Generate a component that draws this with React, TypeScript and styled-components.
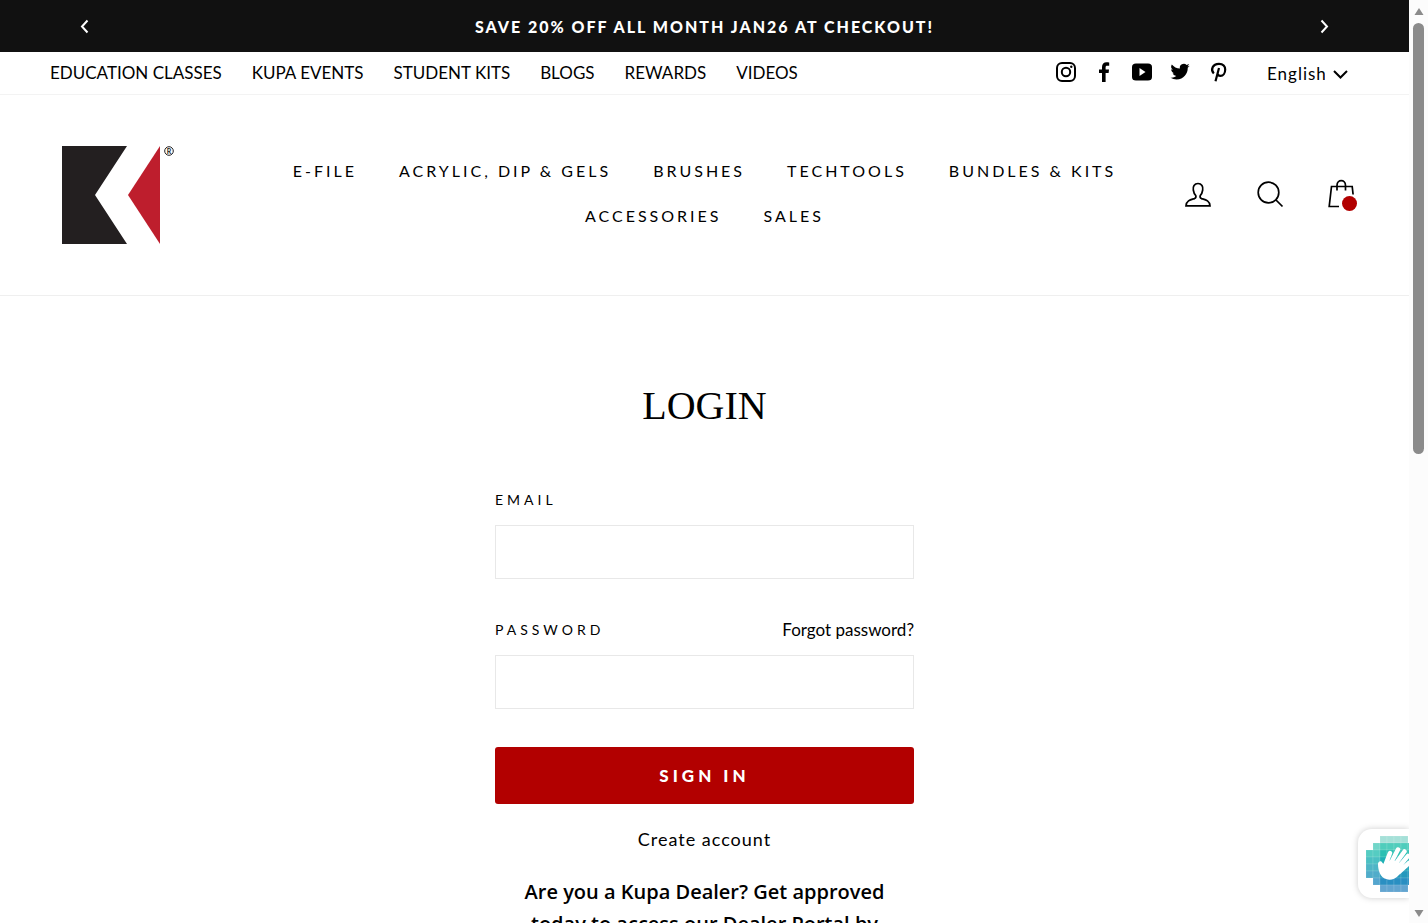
import React from "react";
import styled, { createGlobalStyle } from "styled-components";

const sans = `Lato, "Liberation Sans", sans-serif`;

const GlobalStyle = createGlobalStyle`
  * { box-sizing: border-box; }
  body { margin: 0; background: #fff; color: #000; font-family: ${sans}; }
  a { color: inherit; text-decoration: none; }
  button { font-family: inherit; cursor: pointer; }
`;

const Window = styled.div`
  display: flex;
  height: 100vh;
  overflow: hidden;
`;

const Page = styled.div`
  flex: 1;
  min-width: 0;
  overflow-y: auto;
  scrollbar-width: none;
`;

const Announcement = styled.section`
  display: flex;
  align-items: center;
  justify-content: space-between;
  height: 52px;
  padding: 0 72px;
  background: #111;
  color: #fff;
`;

const AnnouncementText = styled.p`
  margin: 0;
  font-size: 16px;
  font-weight: 900;
  letter-spacing: 2px;
`;

const IconButton = styled.button`
  display: flex;
  padding: 0;
  border: 0;
  background: none;
  color: inherit;
`;

const Toolbar = styled.div`
  display: flex;
  align-items: center;
  height: 43px;
  padding: 0 60px 0 50px;
  border-bottom: 1px solid #f3f3f3;
`;

const ToolbarLinks = styled.nav`
  display: flex;
  flex: 1;
  gap: 30px;
  font-size: 17px;
  line-height: 24px;
`;

const SocialLinks = styled.div`
  display: flex;
  align-items: center;
  gap: 16px;
  margin-right: 38px;
  padding-bottom: 2px;
`;

const SocialLink = styled.a`
  display: flex;
`;

const Language = styled.label`
  display: flex;
  align-items: center;
  gap: 8px;
  padding-top: 2px;
`;

const LanguageSelect = styled.select`
  appearance: none;
  width: 58px;
  padding: 0;
  border: 0;
  background: none;
  color: #000;
  font-family: inherit;
  font-size: 17px;
  letter-spacing: 1px;
  line-height: 24px;
`;

const Header = styled.header`
  display: grid;
  grid-template-columns: 200px 1fr 200px;
  align-items: center;
  height: 201px;
  padding: 0 50px;
  border-bottom: 1px solid #efefef;
`;

const LogoLink = styled.a`
  display: flex;
  padding-left: 12px;
`;

const MainNav = styled.nav`
  display: flex;
  flex-wrap: wrap;
  justify-content: center;
  column-gap: 42px;
  padding-bottom: 4px;
  font-size: 16px;
  letter-spacing: 3px;
  line-height: 45px;
`;

const HeaderIcons = styled.div`
  display: flex;
  justify-content: flex-end;
  gap: 42px;
  padding-right: 2px;
`;

const CartLink = styled.a`
  position: relative;
  display: flex;
`;

const CartBubble = styled.span`
  position: absolute;
  right: 0;
  bottom: 1px;
  width: 15px;
  height: 15px;
  border-radius: 50%;
  background: #b20000;
`;

const Main = styled.main`
  width: 419px;
  margin: 0 auto;
  padding: 86px 0 60px;
`;

const Title = styled.h1`
  margin: 0 0 57px;
  font-family: "Liberation Serif", serif;
  font-size: 40px;
  font-weight: 400;
  line-height: 48px;
  text-align: center;
`;

const FieldHead = styled.div`
  display: flex;
  align-items: center;
  justify-content: space-between;
  height: 24px;
`;

const Label = styled.label`
  font-size: 14px;
  letter-spacing: 4px;
`;

const ForgotLink = styled.a`
  font-size: 17px;
`;

const Field = styled.input`
  display: block;
  width: 100%;
  height: 54px;
  margin: 14px 0 38px;
  padding: 8px 10px;
  border: 1px solid #e8e8e8;
  background: #fff;
  font-size: 17px;
`;

const SubmitButton = styled.button`
  display: block;
  width: 100%;
  height: 57px;
  border: 0;
  border-radius: 3px;
  background: #b20000;
  color: #fff;
  font-size: 17px;
  font-weight: 900;
  letter-spacing: 4px;
`;

const CreateAccount = styled.a`
  display: block;
  margin: 20px 0 22px;
  font-size: 18px;
  letter-spacing: 1px;
  line-height: 30px;
  text-align: center;
`;

const DealerNote = styled.p`
  margin: 0;
  padding: 0 20px;
  font-family: "Open Sans", sans-serif;
  font-size: 20px;
  font-weight: 600;
  line-height: 32px;
  text-align: center;
`;

const CaptchaBadge = styled.aside`
  position: fixed;
  right: 19px;
  bottom: 25px;
  width: 51px;
  height: 69px;
  padding: 7px 0 0 8px;
  overflow: hidden;
  border-radius: 14px 0 0 14px;
  background: #fff;
  filter: drop-shadow(0 0 3px #ccc);
`;

const ScrollRail = styled.div`
  position: relative;
  display: flex;
  flex-direction: column;
  align-items: center;
  width: 19px;
  height: 100%;
  padding: 8px 0 6px;
  background: #fcfcfc;
`;

const ScrollThumb = styled.div`
  flex: 17;
  width: 11px;
  margin-top: 8px;
  border-radius: 6px;
  background: #8b8b8b;
`;

const ScrollTrack = styled.div`
  flex: 18;
`;

const Chevron = ({ d, w = 16, h = 16 }: { d: string; w?: number; h?: number }) => (
  <svg width={w} height={h} viewBox={`0 0 ${w} ${h}`} fill="none" stroke="currentColor" strokeWidth="2" aria-hidden="true">
    <path d={d} />
  </svg>
);

const socials = [
  {
    name: "Instagram",
    shape: (
      <>
        <rect x="2" y="2" width="18" height="18" rx="5" fill="none" stroke="#000" strokeWidth="2" />
        <circle cx="11" cy="11" r="4.2" fill="none" stroke="#000" strokeWidth="2" />
        <circle cx="16.3" cy="5.7" r="1.2" />
      </>
    ),
  },
  { name: "Facebook", shape: <path d="M9 21v-9H6V8.500h3V6c0-3 1.800-4.700 4.500-4.700 1.200 0 2.300.1 2.700.2v3.200h-1.900c-1.400 0-1.700.7-1.700 1.700v2.100h3.400l-.4 3.500h-3V21z" /> },
  { name: "YouTube", shape: <path fillRule="evenodd" d="M5 2.500h12Q21 2.500 21 6v10q0 3.500-4 3.500H5Q1 19.500 1 16V6q0-3.500 4-3.500zM8.500 7v8l6-4z" /> },
  {
    name: "Twitter",
    shape: (
      <path transform="translate(1.500 1) scale(.8)" d="M23.950 4.570a10 10 0 0 1-2.820.770 4.960 4.960 0 0 0 2.160-2.720c-.950.550-2 .950-3.120 1.180a4.920 4.920 0 0 0-8.390 4.480C7.690 8.090 4.070 6.130 1.640 3.160a4.920 4.920 0 0 0 1.520 6.570 4.900 4.900 0 0 1-2.230-.610v.060a4.920 4.920 0 0 0 3.950 4.830 5 5 0 0 1-2.210.080 4.940 4.940 0 0 0 4.600 3.420A9.870 9.870 0 0 1 0 19.540a13.990 13.990 0 0 0 7.550 2.210c9.050 0 14-7.500 14-13.980 0-.210 0-.420-.020-.630a9.940 9.940 0 0 0 2.460-2.550z" />
    ),
  },
  {
    name: "Pinterest",
    shape: <path fill="none" stroke="#000" strokeWidth="2.200" d="M6.800 12.500C3.300 9 5.500 2.800 12 2.800c4.300 0 6.200 2.800 6.200 5.700 0 3.900-2.100 6.400-4.700 6.400-1.600 0-2.700-1-2.700-2.200M12 7 8.500 20.200" />,
  },
];

const PersonIcon = () => (
  <svg width="30" height="30" viewBox="0 0 30 30" fill="none" stroke="#000" strokeWidth="1.700">
    <path d="M15 4.500c-3.700 0-5.300 3-4.700 6.500.4 2.600 1.300 4.500 2.500 5.700.5 1.500 0 2.300-1.300 2.900-4 1.200-8 1.800-8.500 7.200h24c-.5-5.400-4.500-6-8.500-7.200-1.300-.6-1.800-1.400-1.300-2.900 1.200-1.200 2.100-3.100 2.500-5.700.6-3.500-1-6.500-4.700-6.500z" />
  </svg>
);

const SearchIcon = () => (
  <svg width="30" height="30" viewBox="0 0 30 30" fill="none" stroke="#000" strokeWidth="1.700">
    <circle cx="13.500" cy="13.500" r="10.300" />
    <path d="m21 21 6.500 6.500" />
  </svg>
);

const BagIcon = () => (
  <svg width="30" height="30" viewBox="0 0 30 30" fill="none" stroke="#000" strokeWidth="1.700">
    <path d="M12 27.500H2.200L4.500 7.500h20.700l.9 8M10 11.500V6.500c0-6.500 8.500-6.500 8.500 0v5" />
  </svg>
);

const tileRows = ["00111100", "01111110", "11111111", "11111111", "11111111", "11111111", "01111110", "00111100"];
const tileColors = ["#8fd9cf", "#4fcdbc", "#2bc0b3", "#1fb1b5", "#22a3b8", "#2598bd", "#2a8fc2", "#3d8fc5"];

const HandLogo = () => (
  <svg width="56" height="56" viewBox="0 0 56 56" role="img" aria-label="hCaptcha">
    {tileRows.map((row, y) =>
      row.split("").map((on, x) =>
        on === "1" ? (
          <rect key={`${x}-${y}`} x={x * 7} y={y * 7} width="7" height="7" fill={tileColors[y]} stroke="#fff" strokeOpacity=".2" strokeWidth=".6" opacity={x < 2 || y < 1 || y > 6 ? 0.8 : 1} />
        ) : null,
      ),
    )}
    <path
      fill="none"
      stroke="#fff"
      strokeWidth="4.500"
      strokeLinecap="round"
      d="M19 30 24 17M24 29 32 13.500M28 30 38.500 15.500M31 33 42 20M33 36 43 27"
    />
    <path fill="#fff" d="M16.500 27c-1-3-4.500-2-4.500 1 0 6 2 11 5 13.500 5 3.500 11 2.500 15-1.500l4-5-3-9-9-2-5 5z" />
  </svg>
);

const utilityLinks = ["EDUCATION CLASSES", "KUPA EVENTS", "STUDENT KITS", "BLOGS", "REWARDS", "VIDEOS"];
const mainLinks = ["E-FILE", "ACRYLIC, DIP & GELS", "BRUSHES", "TECHTOOLS", "BUNDLES & KITS", "ACCESSORIES", "SALES"];

export default function App() {
  return (
    <Window>
      <GlobalStyle />
      <Page>
        <Announcement>
          <IconButton aria-label="Previous">
            <Chevron w={24} h={16} d="M15.500 2.500 10 8.500l5.500 6" />
          </IconButton>
          <AnnouncementText>SAVE 20% OFF ALL MONTH JAN26 AT CHECKOUT!</AnnouncementText>
          <IconButton aria-label="Next">
            <Chevron w={24} h={16} d="m8.500 2.500 5.500 6-5.500 6" />
          </IconButton>
        </Announcement>
        <Toolbar>
          <ToolbarLinks>
            {utilityLinks.map((text) => (
              <a href="#" key={text}>{text}</a>
            ))}
          </ToolbarLinks>
          <SocialLinks>
            {socials.map(({ name, shape }) => (
              <SocialLink href="#" key={name} aria-label={name}>
                <svg width="22" height="22" viewBox="0 0 22 22">{shape}</svg>
              </SocialLink>
            ))}
          </SocialLinks>
          <Language>
            <LanguageSelect aria-label="Language">
              <option>English</option>
            </LanguageSelect>
            <Chevron d="m1 5 6.500 6.500L14 5" />
          </Language>
        </Toolbar>
        <Header>
          <LogoLink href="#" aria-label="Kupa">
            <svg width="114" height="98" viewBox="0 0 114 98">
              <path fill="#231f20" d="M0 0h65L33 49l32 49H0z" />
              <path fill="#be1e2d" d="M98 0v98L66 49z" />
              <circle cx="107" cy="5" r="4.300" fill="none" stroke="#231f20" />
              <text x="107" y="8" textAnchor="middle" fontSize="7" fontWeight="700" fill="#231f20">R</text>
            </svg>
          </LogoLink>
          <MainNav>
            {mainLinks.map((text) => (
              <a href="#" key={text}>{text}</a>
            ))}
          </MainNav>
          <HeaderIcons>
            <a href="#" aria-label="Log in"><PersonIcon /></a>
            <a href="#" aria-label="Search"><SearchIcon /></a>
            <CartLink href="#" aria-label="Cart">
              <BagIcon />
              <CartBubble />
            </CartLink>
          </HeaderIcons>
        </Header>
        <Main>
          <Title>LOGIN</Title>
          <form>
            <FieldHead>
              <Label htmlFor="email">EMAIL</Label>
            </FieldHead>
            <Field id="email" type="email" />
            <FieldHead>
              <Label htmlFor="password">PASSWORD</Label>
              <ForgotLink href="#">Forgot password?</ForgotLink>
            </FieldHead>
            <Field id="password" type="password" />
            <SubmitButton type="button">SIGN IN</SubmitButton>
          </form>
          <CreateAccount href="#">Create account</CreateAccount>
          <DealerNote>Are you a Kupa Dealer? Get approved today to access our Dealer Portal by</DealerNote>
        </Main>
      </Page>
      <CaptchaBadge>
        <HandLogo />
      </CaptchaBadge>
      <ScrollRail aria-hidden="true">
        <svg width="10" height="7" viewBox="0 0 10 7"><path fill="#8b8b8b" d="M5 0l4.500 7h-9z" /></svg>
        <ScrollThumb />
        <ScrollTrack />
        <svg width="10" height="7" viewBox="0 0 10 7"><path fill="#8b8b8b" d="M5 7 .500 0h9z" /></svg>
      </ScrollRail>
    </Window>
  );
}
